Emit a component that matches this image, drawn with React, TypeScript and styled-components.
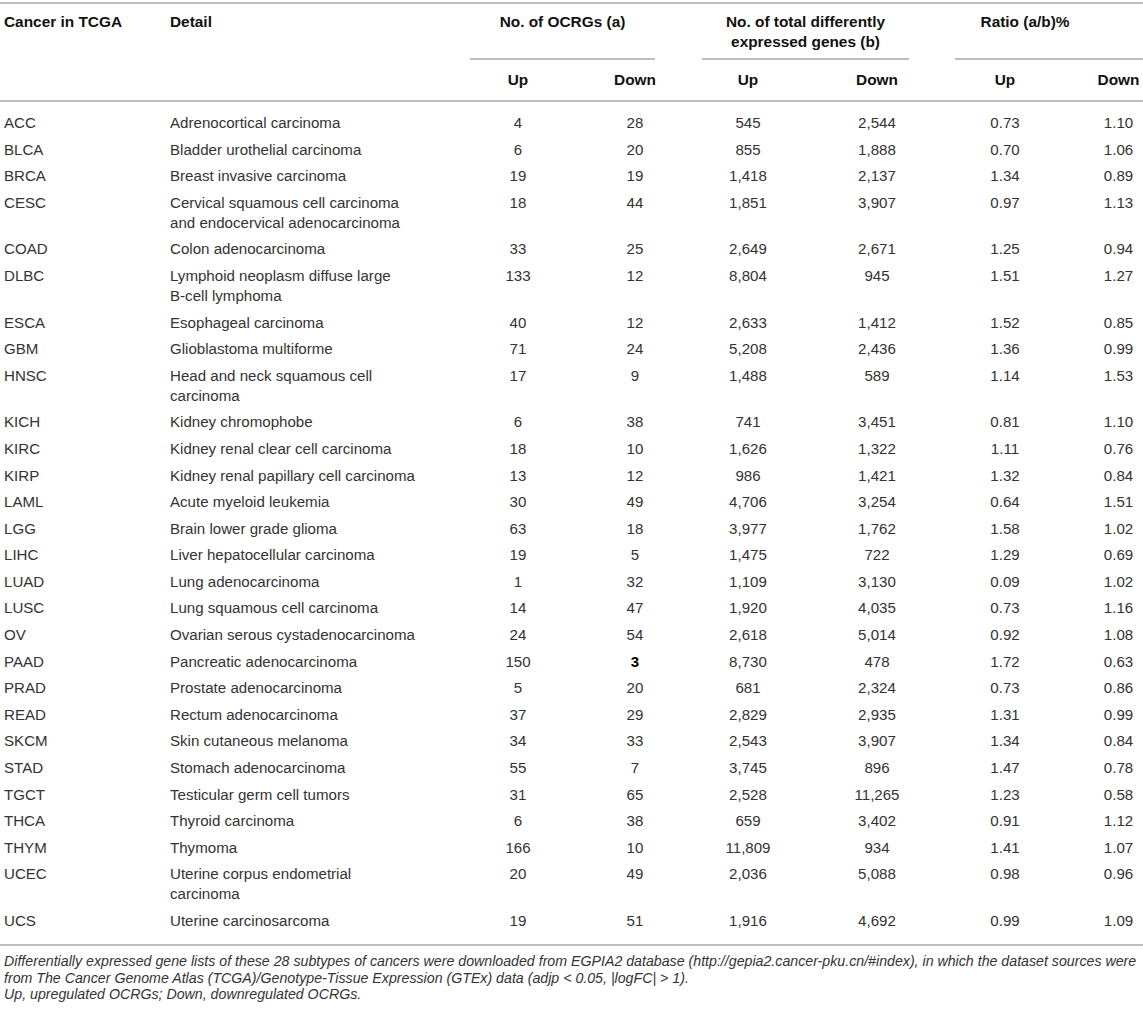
import React from "react";
import styled, { createGlobalStyle, css } from "styled-components";

const GlobalStyle = createGlobalStyle`
  html, body { margin: 0; padding: 0; background: #fff; }
  body { font-family: "Liberation Sans", Arial, Helvetica, sans-serif; color: #333; }
`;

const LINE = "#bdbdbd";

const columns = css`
  display: grid;
  grid-template-columns: 166px 300px 104px 130px 96px 162px 94px 91px;
`;

const Page = styled.div`
  width: 1143px;
  padding-top: 2px;
`;

const Table = styled.div`
  border-top: 2px solid ${LINE};
`;

const Head = styled.div`
  ${columns};
  grid-template-rows: auto auto;
  border-bottom: 2px solid ${LINE};
  color: #111;
  font-weight: bold;
  font-size: 15.4px;
  line-height: 20px;
`;

const HeadLabel = styled.div<{ $col: number }>`
  grid-column: ${(p) => p.$col};
  grid-row: 1 / span 2;
  padding: 8px 4px 0;
  white-space: nowrap;
`;

const GroupHead = styled.div<{ $col: number; $ml: number; $mr: number; $pr?: number }>`
  grid-column: ${(p) => p.$col} / span 2;
  grid-row: 1;
  margin: 0 ${(p) => p.$mr}px 0 ${(p) => p.$ml}px;
  padding: 8px ${(p) => p.$pr ?? 0}px 6px 0;
  border-bottom: 2px solid ${LINE};
  text-align: center;
  white-space: nowrap;
`;

const SubHead = styled.div<{ $col: number; $pl?: number }>`
  grid-column: ${(p) => p.$col};
  grid-row: 2;
  padding: 10px 0 10px ${(p) => p.$pl ?? 0}px;
  text-align: center;
`;

const Body = styled.div`
  padding: 7.7px 0 10px;
  border-bottom: 2px solid ${LINE};
  font-size: 15.1px;
  line-height: 20px;
  color: #333;
`;

const Row = styled.div`
  ${columns};
`;

const Cell = styled.div`
  padding: 3.3px 4px;
  white-space: nowrap;
`;

const NumCell = styled.div<{ $pl?: number; $bold?: boolean }>`
  padding: 3.3px 0 3.3px ${(p) => p.$pl ?? 0}px;
  text-align: center;
  white-space: nowrap;
  font-weight: ${(p) => (p.$bold ? "bold" : "normal")};
  color: ${(p) => (p.$bold ? "#000" : "inherit")};
`;

const Notes = styled.div`
  margin-top: 7px;
  padding: 0 4px;
  font-style: italic;
  font-size: 14.2px;
  line-height: 16.5px;
  color: #333;
  white-space: nowrap;
`;

const NoteLine = styled.div``;

type RowData = [string, string[], string, string, string, string, string, string];

const rows: RowData[] = [
  ["ACC", ["Adrenocortical carcinoma"], "4", "28", "545", "2,544", "0.73", "1.10"],
  ["BLCA", ["Bladder urothelial carcinoma"], "6", "20", "855", "1,888", "0.70", "1.06"],
  ["BRCA", ["Breast invasive carcinoma"], "19", "19", "1,418", "2,137", "1.34", "0.89"],
  ["CESC", ["Cervical squamous cell carcinoma", "and endocervical adenocarcinoma"], "18", "44", "1,851", "3,907", "0.97", "1.13"],
  ["COAD", ["Colon adenocarcinoma"], "33", "25", "2,649", "2,671", "1.25", "0.94"],
  ["DLBC", ["Lymphoid neoplasm diffuse large", "B-cell lymphoma"], "133", "12", "8,804", "945", "1.51", "1.27"],
  ["ESCA", ["Esophageal carcinoma"], "40", "12", "2,633", "1,412", "1.52", "0.85"],
  ["GBM", ["Glioblastoma multiforme"], "71", "24", "5,208", "2,436", "1.36", "0.99"],
  ["HNSC", ["Head and neck squamous cell", "carcinoma"], "17", "9", "1,488", "589", "1.14", "1.53"],
  ["KICH", ["Kidney chromophobe"], "6", "38", "741", "3,451", "0.81", "1.10"],
  ["KIRC", ["Kidney renal clear cell carcinoma"], "18", "10", "1,626", "1,322", "1.11", "0.76"],
  ["KIRP", ["Kidney renal papillary cell carcinoma"], "13", "12", "986", "1,421", "1.32", "0.84"],
  ["LAML", ["Acute myeloid leukemia"], "30", "49", "4,706", "3,254", "0.64", "1.51"],
  ["LGG", ["Brain lower grade glioma"], "63", "18", "3,977", "1,762", "1.58", "1.02"],
  ["LIHC", ["Liver hepatocellular carcinoma"], "19", "5", "1,475", "722", "1.29", "0.69"],
  ["LUAD", ["Lung adenocarcinoma"], "1", "32", "1,109", "3,130", "0.09", "1.02"],
  ["LUSC", ["Lung squamous cell carcinoma"], "14", "47", "1,920", "4,035", "0.73", "1.16"],
  ["OV", ["Ovarian serous cystadenocarcinoma"], "24", "54", "2,618", "5,014", "0.92", "1.08"],
  ["PAAD", ["Pancreatic adenocarcinoma"], "150", "*3", "8,730", "478", "1.72", "0.63"],
  ["PRAD", ["Prostate adenocarcinoma"], "5", "20", "681", "2,324", "0.73", "0.86"],
  ["READ", ["Rectum adenocarcinoma"], "37", "29", "2,829", "2,935", "1.31", "0.99"],
  ["SKCM", ["Skin cutaneous melanoma"], "34", "33", "2,543", "3,907", "1.34", "0.84"],
  ["STAD", ["Stomach adenocarcinoma"], "55", "7", "3,745", "896", "1.47", "0.78"],
  ["TGCT", ["Testicular germ cell tumors"], "31", "65", "2,528", "11,265", "1.23", "0.58"],
  ["THCA", ["Thyroid carcinoma"], "6", "38", "659", "3,402", "0.91", "1.12"],
  ["THYM", ["Thymoma"], "166", "10", "11,809", "934", "1.41", "1.07"],
  ["UCEC", ["Uterine corpus endometrial", "carcinoma"], "20", "49", "2,036", "5,088", "0.98", "0.96"],
  ["UCS", ["Uterine carcinosarcoma"], "19", "51", "1,916", "4,692", "0.99", "1.09"],
];

const LAST_PAD = 42;

export default function App() {
  return (
    <>
      <GlobalStyle />
      <Page>
        <Table>
          <Head>
            <HeadLabel $col={1}>Cancer in TCGA</HeadLabel>
            <HeadLabel $col={2}>Detail</HeadLabel>
            <GroupHead $col={3} $ml={4} $mr={45}>No. of OCRGs (a)</GroupHead>
            <GroupHead $col={5} $ml={2} $mr={49}>
              No. of total differently
              <br />
              expressed genes (b)
            </GroupHead>
            <GroupHead $col={7} $ml={-3} $mr={0} $pr={48}>Ratio (a/b)%</GroupHead>
            <SubHead $col={3}>Up</SubHead>
            <SubHead $col={4}>Down</SubHead>
            <SubHead $col={5}>Up</SubHead>
            <SubHead $col={6}>Down</SubHead>
            <SubHead $col={7}>Up</SubHead>
            <SubHead $col={8} $pl={LAST_PAD}>Down</SubHead>
          </Head>
          <Body>
            {rows.map(([code, detail, ...nums]) => (
              <Row key={code}>
                <Cell>{code}</Cell>
                <Cell>
                  {detail.map((line, i) => (
                    <React.Fragment key={i}>
                      {i > 0 && <br />}
                      {line}
                    </React.Fragment>
                  ))}
                </Cell>
                {nums.map((n, i) => {
                  const bold = n.startsWith("*");
                  return (
                    <NumCell key={i} $bold={bold} $pl={i === 5 ? LAST_PAD : 0}>
                      {bold ? n.slice(1) : n}
                    </NumCell>
                  );
                })}
              </Row>
            ))}
          </Body>
        </Table>
        <Notes>
          <NoteLine>
            Differentially expressed gene lists of these 28 subtypes of cancers were downloaded from EGPIA2 database
            (http://gepia2.cancer-pku.cn/#index), in which the dataset sources were
          </NoteLine>
          <NoteLine>
            from The Cancer Genome Atlas (TCGA)/Genotype-Tissue Expression (GTEx) data (adjp &lt; 0.05, |logFC| &gt; 1).
          </NoteLine>
          <NoteLine>Up, upregulated OCRGs; Down, downregulated OCRGs.</NoteLine>
        </Notes>
      </Page>
    </>
  );
}
